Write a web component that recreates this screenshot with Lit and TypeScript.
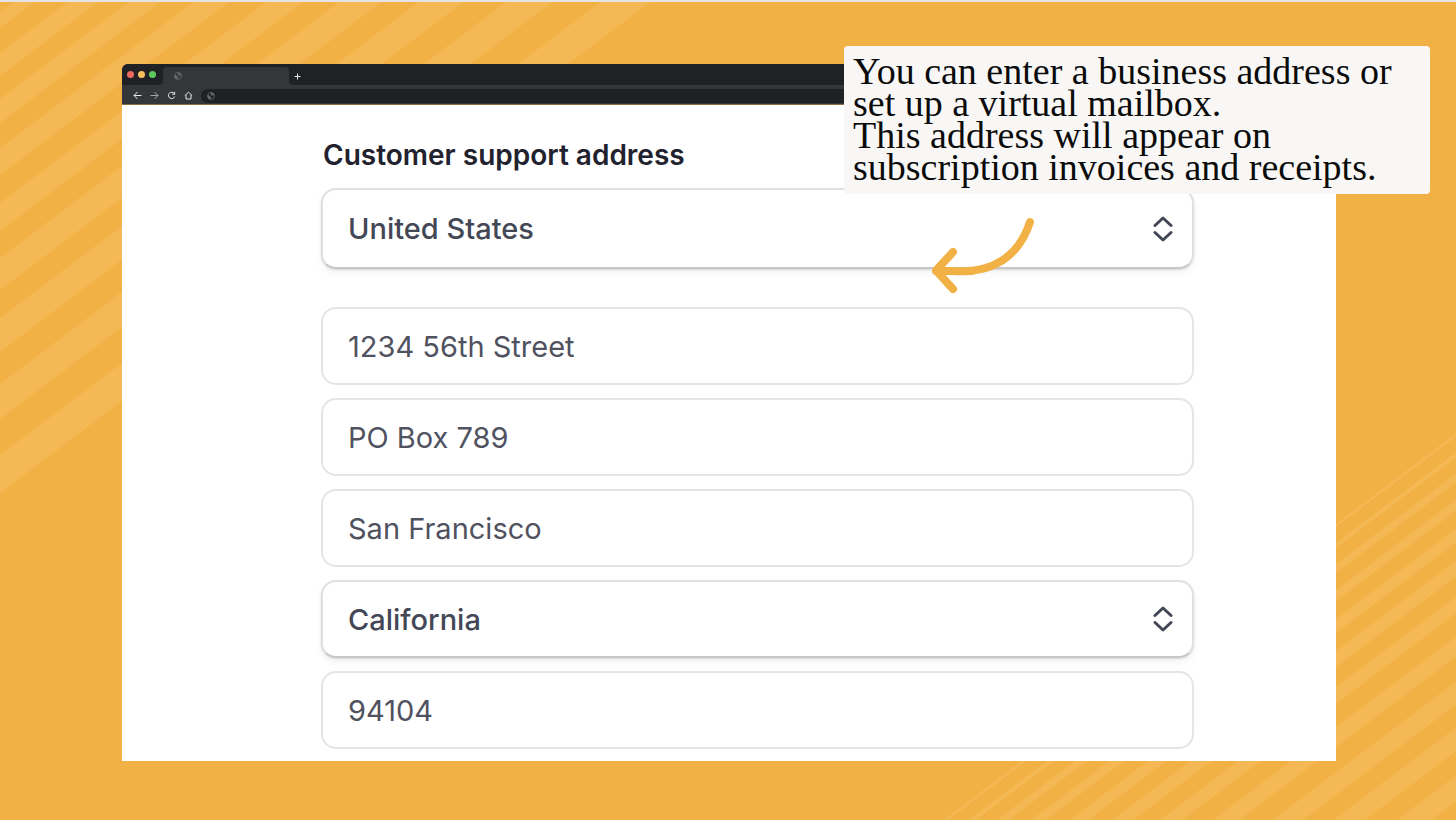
import { LitElement, html, css, svg } from "lit";
import { customElement } from "lit/decorators.js";

// Each stripe is [top, bottom] measured on a vertical line at x; all share one slope.
const SLOPE = 0.755;
const UPPER_STRIPES = [
  [12, 28], [53, 76], [99, 123], [148, 175], [203, 231],
  [258, 290], [318, 352], [384, 419], [455, 493],
];
const LOWER_STRIPES = [
  [524, 527], [543, 548], [564, 573], [590, 601], [619, 633], [651, 667],
  [687, 704], [727, 747], [772, 795], [818, 842], [866, 892],
];

const band = (x: number, [top, bottom]: number[]) => {
  const left = x - 600;
  const right = x + 700;
  const at = (y: number, px: number) => y + (x - px) * SLOPE;
  return svg`<polygon points="${left},${at(top, left)} ${right},${at(top, right)} ${right},${at(bottom, right)} ${left},${at(bottom, left)}"></polygon>`;
};

const globe = html`<svg class="globe" viewBox="0 0 16 16" aria-hidden="true">
  <circle cx="8" cy="8" r="7" fill="none" stroke="currentColor" stroke-width="1.6"></circle>
  <path fill="currentColor" d="M2 5.500 5 8l1.500 1 2 1.200-.3 1.800-1.600 1.200L6.400 15C3 14 1 11 1.300 8ZM7 1l4 .6 3 3.200-1.300 2.700-2-1L9 7.200 6.800 6.500 8.600 4Z"></path>
</svg>`;

@customElement("app-root")
export class AppRoot extends LitElement {
  static styles = css`
    :host {
      display: block;
      font-family: Inter, "Liberation Sans", sans-serif;
      color: #474a59;
    }
    .page {
      position: relative;
      box-sizing: border-box;
      min-height: 100vh;
      overflow: hidden;
      padding: 62px 120px 58px 122px;
      border-top: 2px solid #e5e3e5;
      background: #f2b145;
    }
    .stripes {
      position: absolute;
      top: -2px;
      left: 0;
      width: 100%;
      height: calc(100% + 2px);
      fill: #f4b954;
    }
    .window {
      position: relative;
      border-radius: 6px 6px 0 0;
      background: #fff;
      overflow: hidden;
    }
    button {
      margin: 0;
      padding: 0;
      border: 0;
      background: none;
      color: #e8e8ea;
      font: inherit;
      display: grid;
      place-items: center;
    }
    .tabs {
      display: flex;
      height: 21px;
      background: linear-gradient(#202124 12px, #35363a 12px);
    }
    .lights {
      display: flex;
      align-items: center;
      gap: 4px;
      padding: 0 7px 0 5px;
      border-bottom-right-radius: 4px;
      background: #202124;
    }
    .light {
      width: 7px;
      height: 7px;
      border-radius: 50%;
    }
    .red { background: #ed695e; }
    .amber { background: #f5bf5f; }
    .green { background: #5ec95f; }
    .tab {
      flex: 0 0 126px;
      margin-top: 3px;
      padding-left: 11px;
      border-radius: 4px 4px 0 0;
      background: #35363a;
      place-items: center start;
    }
    .strip {
      flex: 1;
      display: flex;
      align-items: center;
      padding: 3px 0 0 4px;
      border-bottom-left-radius: 4px;
      background: #202124;
    }
    .globe {
      display: block;
      width: 8px;
      height: 8px;
      color: #68696d;
    }
    .icon {
      display: block;
      width: 9px;
      height: 9px;
      fill: none;
      stroke: currentColor;
      stroke-width: 1;
    }
    .toolbar {
      box-sizing: border-box;
      display: flex;
      align-items: center;
      gap: 8px;
      height: 20px;
      padding: 2px 35px 0 11px;
      border-bottom: 1px solid #8b6d40;
      background: #35363a;
    }
    .forward { color: #a5a6a9; }
    .address {
      flex: 1;
      display: flex;
      align-items: center;
      height: 14px;
      padding-left: 6px;
      border-radius: 7px;
      background: #202124;
    }
    .url {
      flex: 1;
      min-width: 0;
      height: 12px;
      padding: 0 4px;
      border: 0;
      background: none;
      color: #e8e8ea;
      font-size: 9px;
    }
    .form {
      display: flex;
      flex-direction: column;
      gap: 13px;
      padding: 30px 142px 12px 199px;
    }
    .title {
      padding-left: 2px;
      color: #21222e;
      font-size: 28px;
      font-weight: 600;
      line-height: 40px;
    }
    .field {
      box-sizing: border-box;
      width: 100%;
      height: 78px;
      margin: 0;
      padding: 1px 25px 0;
      border: 2px solid #e4e5e7;
      border-radius: 15px;
      background: #fff;
      color: #50525f;
      font: 400 29px/40px Inter, "Liberation Sans", sans-serif;
      outline: none;
    }
    .picker {
      display: grid;
      align-items: center;
    }
    .picker > * { grid-area: 1 / 1; }
    .select {
      appearance: none;
      border-color: #e0e1e3 #dfe0e2 #c6c7ca;
      box-shadow: 0 1px 2px #0000001f, 0 4px 8px #0000000d;
      color: #444756;
      font-weight: 500;
    }
    .country { margin-bottom: 25px; }
    .country .select { height: 81px; }
    .chevrons {
      justify-self: end;
      width: 20px;
      height: 26px;
      margin-right: 21px;
      fill: none;
      stroke: #444756;
      stroke-width: 3;
      stroke-linecap: round;
      stroke-linejoin: round;
      pointer-events: none;
    }
    .note {
      position: absolute;
      top: 44px;
      right: 26px;
      box-sizing: border-box;
      width: 586px;
      margin: 0;
      padding: 9px 9px 11px;
      border-radius: 4px;
      background: #f8f7f5;
      color: #0b0b0b;
      font: 38px/32px "Liberation Serif", serif;
    }
    .pointer {
      position: absolute;
      top: 214px;
      right: 421px;
      width: 104px;
      height: 78px;
      fill: none;
      stroke: #f2b145;
      stroke-width: 8;
      stroke-linecap: round;
      stroke-linejoin: round;
    }
  `;

  private textField(label: string, value: string) {
    return html`<input class="field" type="text" aria-label=${label} .value=${value} />`;
  }

  private selectField(id: string, label: string, value: string, extra = "") {
    return html`<div class="picker ${extra}">
      <select class="field select" id=${id} aria-label=${label}><option>${value}</option></select>
      <svg class="chevrons" viewBox="0 0 20 26" aria-hidden="true">
        <path d="M2 9.500 10 2l8 7.500M2 16.500 10 24l8-7.500"></path>
      </svg>
    </div>`;
  }

  render() {
    return html`<main class="page">
      <svg class="stripes" viewBox="0 0 1456 820" preserveAspectRatio="none" aria-hidden="true">
        ${UPPER_STRIPES.map((s) => band(0, s))}
        ${LOWER_STRIPES.map((s) => band(1336, s))}
      </svg>
      <section class="window">
        <div class="tabs">
          <div class="lights">
            <span class="light red"></span><span class="light amber"></span><span class="light green"></span>
          </div>
          <button class="tab" aria-label="Current tab">${globe}</button>
          <div class="strip">
            <button aria-label="New tab">
              <svg class="icon" viewBox="0 0 9 9"><path d="M4.500 1.500v6M1.500 4.500h6"></path></svg>
            </button>
          </div>
        </div>
        <div class="toolbar">
          <button aria-label="Back">
            <svg class="icon" viewBox="0 0 9 9"><path d="M8.500 4.500H1M4.500 1 1 4.500 4.500 8"></path></svg>
          </button>
          <button class="forward" aria-label="Forward">
            <svg class="icon" viewBox="0 0 9 9"><path d="M.5 4.500H8M4.500 1 8 4.500 4.500 8"></path></svg>
          </button>
          <button aria-label="Reload">
            <svg class="icon" viewBox="0 0 9 9"><path d="M7.300 2.600A3.200 3.200 0 1 0 7.700 5.500M7.700.8v2.500H5.200"></path></svg>
          </button>
          <button aria-label="Home">
            <svg class="icon" viewBox="0 0 9 9"><path d="M.8 4.600 4.500 1.200l3.700 3.400M2 4v4h5V4"></path></svg>
          </button>
          <div class="address">${globe}<input class="url" type="text" aria-label="Address bar" /></div>
        </div>
        <form class="form">
          <label class="title" for="country">Customer support address</label>
          ${this.selectField("country", "Customer support address country", "United States", "country")}
          ${this.textField("Address line 1", "1234 56th Street")}
          ${this.textField("Address line 2", "PO Box 789")}
          ${this.textField("City", "San Francisco")}
          ${this.selectField("state", "State", "California")}
          ${this.textField("ZIP code", "94104")}
        </form>
      </section>
      <p class="note">
        You can enter a business address or<br />set up a virtual mailbox.<br />This address will appear on<br />subscription invoices and receipts.
      </p>
      <svg class="pointer" viewBox="0 0 104 78" aria-hidden="true">
        <path d="M99 6C88 40 62 58 22 55H5M22 36 5 54.500 22 73"></path>
      </svg>
    </main>`;
  }
}
